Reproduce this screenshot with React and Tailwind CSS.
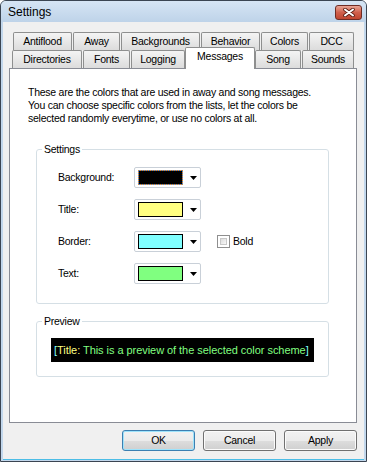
import React from 'react'

const font = { fontFamily: '"Liberation Sans", Arial, sans-serif' }

const row1 = [
  { label: 'Antiflood', cls: 'ml-[10px] w-[59px]' },
  { label: 'Away', cls: 'ml-[1px] w-[47px]' },
  { label: 'Backgrounds', cls: 'ml-[1px] w-[79px]' },
  { label: 'Behavior', cls: 'ml-[1px] w-[59px]' },
  { label: 'Colors', cls: 'ml-[1px] w-[47px]' },
  { label: 'DCC', cls: 'ml-[1px] w-[45px]' },
]

const colorRows = [
  { label: 'Background:', color: 'bg-black', focused: true },
  { label: 'Title:', color: 'bg-[#ffff80]' },
  { label: 'Border:', color: 'bg-[#80ffff]', bold: true },
  { label: 'Text:', color: 'bg-[#80ff80]' },
]

function Tab({ label, cls }) {
  return (
    <div
      className={`${cls} h-[18px] flex items-center justify-center border border-b-0 border-[#8e8f8f] rounded-t-[2px] bg-gradient-to-b from-[#f4f4f4] to-[#dcdcdc] text-[10.5px] tracking-[-0.25px] text-black`}
    >
      {label}
    </div>
  )
}

function ColorCombo({ color, focused }) {
  return (
    <div className="w-[67px] h-[21px] flex items-center pl-[3px] border border-[#c9d0d8] rounded-[2px] bg-white">
      {focused ? (
        <div className="w-[45px] h-[15px] bg-[#3d7fd6]">
          <div className="w-full h-full border border-dotted border-[#f08a1c] bg-black bg-clip-padding" />
        </div>
      ) : (
        <div className={`w-[45px] h-[15px] border border-black ${color}`} />
      )}
      <div className="flex-1 flex justify-center pl-[3px]">
        <svg width="7" height="4" viewBox="0 0 7 4">
          <path d="M0 0h7L3.5 4z" fill="#000" />
        </svg>
      </div>
    </div>
  )
}

function Button({ children, primary }) {
  return (
    <div
      className={`w-[73px] h-[21px] flex items-center justify-center rounded-[3px] border text-[10.5px] tracking-[-0.25px] text-black bg-[linear-gradient(to_bottom,#f2f2f2_0%,#ebebeb_50%,#dddddd_51%,#cfcfcf_100%)] ${
        primary ? 'border-[#3c7fb1] shadow-[inset_0_0_0_1px_#9ee3fb]' : 'border-[#707070] shadow-[inset_0_0_0_1px_#fbfbfb]'
      }`}
    >
      {children}
    </div>
  )
}

export default function App() {
  return (
    <div
      style={font}
      className="w-[367px] h-[462px] flex flex-col border border-[#3b4552] rounded-t-[6px] overflow-hidden bg-[#c2d7ec]"
    >
      {/* Title bar */}
      <div className="h-[21px] shrink-0 flex items-center justify-between pl-[7px] pr-[4px] bg-gradient-to-b from-[#d6e5f4] to-[#bed3e9]">
        <span className="text-[12px] text-black">Settings</span>
        <div className="w-[27px] h-[15px] mt-[1px] flex items-center justify-center rounded-[3px] border border-[#6e2c24] bg-gradient-to-b from-[#e8a596] via-[#d0604c] to-[#c0452f]">
          <svg width="12" height="9" viewBox="0 0 12 9">
            <path d="M2 1.5l8 6M10 1.5l-8 6" stroke="#5a1c12" strokeWidth="3.6" strokeLinecap="round" />
            <path d="M2 1.5l8 6M10 1.5l-8 6" stroke="#fff" strokeWidth="2" strokeLinecap="round" />
          </svg>
        </div>
      </div>

      {/* Client area */}
      <div className="flex-1 mx-[2px] mb-[1px] bg-[#f0f0f0] flex flex-col border-b border-[#4cbde6]">
        {/* Tabs */}
        <div className="mt-[10px] flex h-[18px]">
          {row1.map((t) => (
            <Tab key={t.label} {...t} />
          ))}
        </div>
        <div className="flex items-end h-[18px]">
          <Tab label="Directories" cls="ml-[9px] w-[70px]" />
          <Tab label="Fonts" cls="ml-[1px] w-[47px]" />
          <Tab label="Logging" cls="ml-[1px] w-[54px]" />
          <div className="relative z-10 w-[70px] h-[22px] mb-[-1px] pb-[3px] flex items-center justify-center border border-b-0 border-[#8e8f8f] rounded-t-[2px] bg-white text-[10.5px] tracking-[-0.25px] text-black">
            Messages
          </div>
          <Tab label="Song" cls="w-[46px]" />
          <Tab label="Sounds" cls="ml-[1px] w-[52px]" />
        </div>

        {/* Panel */}
        <div className="ml-[6px] w-[348px] h-[355px] shrink-0 border border-[#898c95] bg-white flex flex-col text-[10.5px] tracking-[-0.25px]">
          <p className="pl-[18px] pt-[17px] leading-[13px] text-black whitespace-nowrap">
            These are the colors that are used in away and song messages.
            <br />
            You can choose specific colors from the lists, let the colors be
            <br />
            selected randomly everytime, or use no colors at all.
          </p>

          <fieldset className="ml-[26px] mt-[18px] w-[293px] border border-[#d5dfe5] rounded-[3px]">
            <legend className="ml-[5px] px-[2px] leading-[13px] text-black">Settings</legend>
            <div className="pt-[11px] pb-[19px] pl-[21px] flex flex-col gap-[11px]">
              {colorRows.map((r) => (
                <div key={r.label} className="flex items-center h-[21px]">
                  <span className="w-[76px] text-black">{r.label}</span>
                  <ColorCombo color={r.color} focused={r.focused} />
                  {r.bold && (
                    <div className="ml-[16px] flex items-center">
                      <div className="w-[13px] h-[13px] border border-[#8f8f8f] p-[2px] bg-white">
                        <div className="w-full h-full border border-[#c8c8c8] bg-gradient-to-br from-[#dcdcdc] to-[#f8f8f8]" />
                      </div>
                      <span className="ml-[3px] text-black">Bold</span>
                    </div>
                  )}
                </div>
              ))}
            </div>
          </fieldset>

          <fieldset className="ml-[26px] mt-[11px] w-[293px] border border-[#d5dfe5] rounded-[3px]">
            <legend className="ml-[5px] px-[2px] leading-[13px] text-black">Preview</legend>
            <div className="pt-[10px] pb-[14px] pl-[14px]">
              <div className="w-[263px] h-[24px] bg-black flex items-center pl-[3px] text-[11px] tracking-[-0.05px] whitespace-nowrap">
                <span className="text-[#80ffff]">[</span>
                <span className="text-[#ffff80]">Title:</span>
                <span className="text-[#80ff80] whitespace-pre"> This is a preview of the selected color scheme</span>
                <span className="text-[#80ffff]">]</span>
              </div>
            </div>
          </fieldset>
        </div>

        {/* Buttons */}
        <div className="mt-[7px] pr-[7px] flex justify-end gap-[8px]">
          <Button primary>OK</Button>
          <Button>Cancel</Button>
          <Button>Apply</Button>
        </div>
      </div>
    </div>
  )
}
